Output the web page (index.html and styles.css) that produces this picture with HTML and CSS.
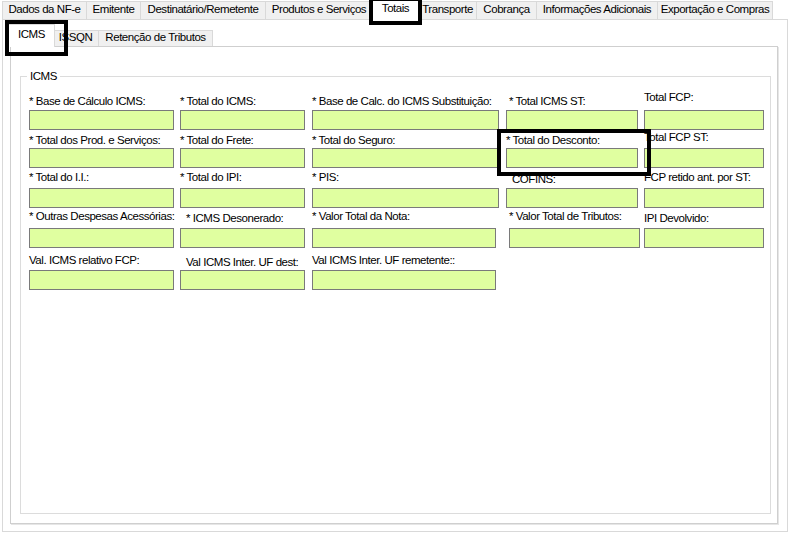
FILE: index.html
```html
<!DOCTYPE html>
<html lang="pt-BR">
<head>
    <meta charset="UTF-8">
    <title>Totais - ICMS</title>
    <link rel="stylesheet" href="styles.css">
</head>
<body>
    <div class="window">
        <!-- Main tabs -->
        <div class="tabstrip">
            <div class="tab tab-dados">Dados da NF-e</div>
            <div class="tab tab-emitente">Emitente</div>
            <div class="tab tab-destinatario">Destinatário/Remetente</div>
            <div class="tab tab-produtos">Produtos e Serviços</div>
            <div class="tab tab-totais active">Totais</div>
            <div class="tab tab-transporte">Transporte</div>
            <div class="tab tab-cobranca">Cobrança</div>
            <div class="tab tab-info">Informações Adicionais</div>
            <div class="tab tab-exportacao">Exportação e Compras</div>
        </div>

        <div class="page">
            <!-- Sub tabs -->
            <div class="subtabs">
                <div class="subtab subtab-icms active">ICMS</div>
                <div class="subtab subtab-issqn">ISSQN</div>
                <div class="subtab subtab-retencao">Retenção de Tributos</div>
            </div>

            <div class="subpage">
                <fieldset class="group">
                    <legend>ICMS</legend>

                    <div class="row r1">
                        <div class="field"><label>* Base de Cálculo ICMS:</label><input type="text"></div>
                        <div class="field"><label>* Total do ICMS:</label><input type="text"></div>
                        <div class="field"><label>* Base de Calc. do ICMS Substituição:</label><input type="text"></div>
                        <div class="field"><label class="indent3">* Total ICMS ST:</label><input type="text"></div>
                        <div class="field up4"><label>Total FCP:</label><input type="text"></div>
                    </div>

                    <div class="row r2">
                        <div class="field"><label>* Total dos Prod. e Serviços:</label><input type="text"></div>
                        <div class="field"><label>* Total do Frete:</label><input type="text"></div>
                        <div class="field"><label>* Total do Seguro:</label><input type="text"></div>
                        <div class="field"><label>* Total do Desconto:</label><input type="text"></div>
                        <div class="field up3"><label>Total FCP ST:</label><input type="text"></div>
                    </div>

                    <div class="row r3">
                        <div class="field"><label>* Total do I.I.:</label><input type="text"></div>
                        <div class="field"><label>* Total do IPI:</label><input type="text"></div>
                        <div class="field"><label>* PIS:</label><input type="text"></div>
                        <div class="field down2"><label class="indent6">COFINS:</label><input type="text"></div>
                        <div class="field"><label>FCP retido ant. por ST:</label><input type="text"></div>
                    </div>

                    <div class="row r4">
                        <div class="field"><label>* Outras Despesas Acessórias:</label><input type="text"></div>
                        <div class="field down2"><label class="indent6">* ICMS Desonerado:</label><input type="text"></div>
                        <div class="field short"><label>* Valor Total da Nota:</label><input type="text"></div>
                        <div class="field nudge"><label>* Valor Total de Tributos:</label><input type="text"></div>
                        <div class="field down2"><label>IPI Devolvido:</label><input type="text"></div>
                    </div>

                    <div class="row r5">
                        <div class="field"><label>Val. ICMS relativo FCP:</label><input type="text"></div>
                        <div class="field down2"><label class="indent6">Val ICMS Inter. UF dest:</label><input type="text"></div>
                        <div class="field short"><label>Val ICMS Inter. UF remetente::</label><input type="text"></div>
                    </div>
                </fieldset>
            </div>
        </div>

        <!-- highlight marks -->
        <div class="mark mark-totais"></div>
        <div class="mark mark-icms"></div>
        <div class="mark mark-desconto"></div>
    </div>
</body>
</html>
```

FILE: styles.css
```css
body {
    margin: 0;
    font-family: "Liberation Sans", Arial, sans-serif;
    font-size: 11.5px;
    letter-spacing: -0.45px;
    color: #000000;
    background-color: #ffffff;
}

.window {
    position: relative;
    width: 789px;
    height: 533px;
    overflow: hidden;
}

/* Main tab strip */
.tabstrip {
    display: flex;
    align-items: flex-end;
    height: 19px;
    padding-left: 2px;
}

.tab {
    box-sizing: border-box;
    height: 18px;
    margin-right: -1px;
    border: 1px solid #d9d9d9;
    border-bottom: none;
    background-color: #f0f0f0;
    line-height: 14px;
    text-align: center;
    white-space: nowrap;
}

.tab.active {
    position: relative;
    z-index: 1;
    height: 20px;
    margin: 0 -3px -1px -2px;
    background-color: #ffffff;
}

.tab-dados { width: 85px; }
.tab-emitente { width: 55px; }
.tab-destinatario { width: 126px; }
.tab-produtos { width: 108px; }
.tab-totais { width: 51px; }
.tab-transporte { width: 59px; }
.tab-cobranca { width: 61px; }
.tab-info { width: 122px; }
.tab-exportacao { width: 116px; }

/* Main tab page */
.page {
    box-sizing: border-box;
    width: 786px;
    height: 513px;
    margin-left: 2px;
    padding-left: 7px;
    border: 1px solid #d9d9d9;
    background-color: #ffffff;
}

/* Sub tab strip */
.subtabs {
    display: flex;
    align-items: flex-end;
    height: 22px;
    margin-top: 4px;
}

.subtab {
    box-sizing: border-box;
    height: 16px;
    margin-right: -1px;
    border: 1px solid #d9d9d9;
    border-bottom: none;
    background-color: #f0f0f0;
    line-height: 13px;
    text-align: center;
    white-space: nowrap;
}

.subtab.active {
    position: relative;
    z-index: 1;
    height: 23px;
    margin: 0 -3px -1px -2px;
    padding-top: 3px;
    background-color: #ffffff;
}

.subtab-icms { width: 47px; }
.subtab-issqn { width: 47px; }
.subtab-retencao { width: 115px; }

.subpage {
    box-sizing: border-box;
    display: flex;
    flex-direction: column;
    width: 768px;
    height: 478px;
    border: 1px solid #cfcfcf;
    box-shadow: 1px 1px 0 #e6e6e6;
}

/* Group box */
.group {
    flex: 1;
    min-width: 0;
    margin: 23px 6px 9px 9px;
    padding: 12px 0 0 8px;
    border: 1px solid #dcdcdc;
}

.group legend {
    margin-left: -2px;
    padding: 0 3px;
    line-height: 13px;
}

/* Field rows */
.row {
    --gap: 2px;
    display: grid;
    grid-template-columns: 151px 132px 194px 138px 126px;
}

.r2 { margin-top: 4px; --gap: 1px; }
.r3 { margin-top: 3px; --gap: 4px; }
.r4 { margin-top: 2px; --gap: 5px; }
.r5 { margin-top: 6px; --gap: 3px; }

.field label {
    display: block;
    height: 13px;
    margin-bottom: var(--gap);
    line-height: 13px;
    white-space: nowrap;
}

.field input {
    display: block;
    box-sizing: border-box;
    height: 20px;
    margin: 0;
    padding: 0 2px;
    border: 1px solid #7a7a7a;
    background-color: #e0ffa0;
    font: inherit;
    outline: none;
}

.field:nth-child(1) input { width: 145px; }
.field:nth-child(2) input { width: 125px; }
.field:nth-child(3) input { width: 187px; }
.field:nth-child(4) input { width: 132px; }
.field:nth-child(5) input { width: 120px; }

.field.short input { width: 184px; }

.field.nudge { margin-left: 3px; }
.field.nudge input { width: 131px; }

/* small label offsets seen on the form */
.indent3 { padding-left: 3px; }
.indent6 { padding-left: 6px; }

.field.up4 label {
    margin-top: -4px;
    margin-bottom: calc(var(--gap) + 4px);
}

.field.up3 label {
    margin-top: -3px;
    margin-bottom: calc(var(--gap) + 3px);
}

.field.down2 label {
    margin-top: 2px;
    margin-bottom: calc(var(--gap) - 2px);
}

/* Black highlight boxes */
.mark {
    position: absolute;
    z-index: 5;
    box-sizing: border-box;
    border: 4px solid #000000;
}

.mark-totais {
    left: 369px;
    top: -3px;
    width: 53px;
    height: 28px;
}

.mark-icms {
    left: 5px;
    top: 20px;
    width: 63px;
    height: 36px;
}

.mark-desconto {
    left: 497px;
    top: 129px;
    width: 154px;
    height: 47px;
}
```
